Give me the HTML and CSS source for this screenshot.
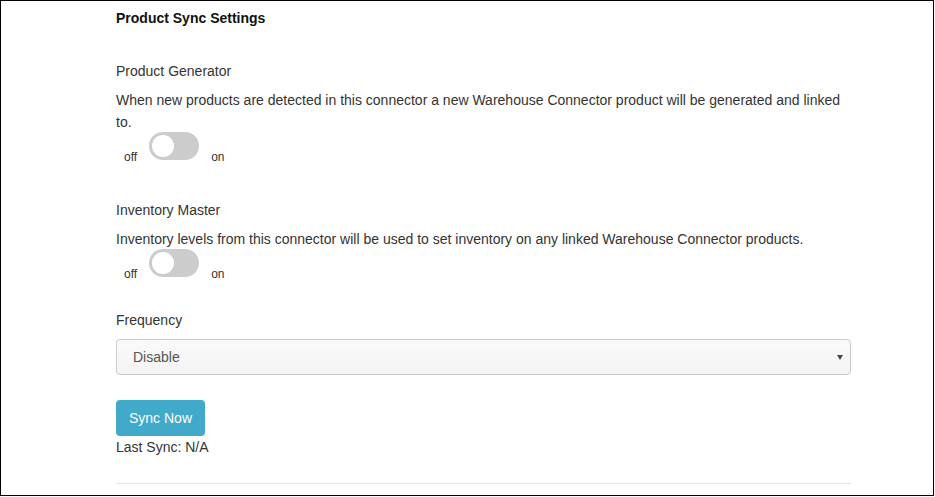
FILE: index.html
```html
<!DOCTYPE html>
<html>
<head>
<meta charset="utf-8">
<link rel="stylesheet" href="styles.css">
</head>
<body>
<div class="frame">
  <div class="content">
    <h4 class="title">Product Sync Settings</h4>

    <div class="setting">
      <div class="label">Product Generator</div>
      <p class="desc">When new products are detected in this connector a new Warehouse Connector product will be generated and linked to.</p>
      <div class="toggle-row">
        <span class="state">off</span>
        <span class="switch"><span class="knob"></span></span>
        <span class="state">on</span>
      </div>
    </div>

    <div class="setting">
      <div class="label">Inventory Master</div>
      <p class="desc">Inventory levels from this connector will be used to set inventory on any linked Warehouse Connector products.</p>
      <div class="toggle-row">
        <span class="state">off</span>
        <span class="switch"><span class="knob"></span></span>
        <span class="state">on</span>
      </div>
    </div>

    <div class="setting freq">
      <div class="label">Frequency</div>
      <div class="select">
        <span class="select-value">Disable</span>
        <span class="caret"></span>
      </div>
    </div>

    <button class="btn">Sync Now</button>
    <div class="last-sync">Last Sync: N/A</div>
    <hr class="rule">
  </div>
</div>
</body>
</html>
```

FILE: styles.css
```css
html, body {
  margin: 0;
  padding: 0;
  background: #fff;
}
body {
  font-family: "Liberation Sans", Arial, sans-serif;
  font-size: 14px;
  color: #333;
}
.frame {
  box-sizing: border-box;
  width: 934px;
  height: 496px;
  border: 1px solid #000;
  overflow: hidden;
}
.content {
  margin-left: 115px;
  width: 735px;
}
.title {
  margin: 0;
  padding-top: 9px;
  font-size: 14px;
  font-weight: bold;
  line-height: 16px;
  color: #111;
}
.label {
  line-height: 22px;
}
.title + .setting {
  padding-top: 34px;
}
.desc {
  margin: 7px 0 0;
  line-height: 22px;
}
.toggle-row {
  display: flex;
  align-items: flex-end;
  height: 29px;
  margin-top: -1px;
}
.state {
  font-size: 12px;
  line-height: 14px;
  margin-bottom: -3px;
}
.state:first-child {
  margin-left: 8px;
  margin-right: 12px;
}
.state:last-child {
  margin-left: 12px;
}
.switch {
  position: relative;
  width: 50px;
  height: 28px;
  border-radius: 14px;
  background: #ccc;
  align-self: flex-start;
}
.knob {
  position: absolute;
  left: 3px;
  top: 3px;
  width: 22px;
  height: 22px;
  border-radius: 50%;
  background: #fff;
}
.setting + .setting {
  padding-top: 38px;
}
.setting.freq {
  padding-top: 31px;
}
.select {
  box-sizing: border-box;
  margin-top: 8px;
  height: 36px;
  border: 1px solid #ccc;
  border-radius: 4px;
  background: linear-gradient(#fafafa, #f4f4f4);
  display: flex;
  align-items: center;
  justify-content: space-between;
  padding: 0 7px 0 16px;
  color: #555;
}
.caret {
  width: 0;
  height: 0;
  border-left: 3px solid transparent;
  border-right: 3px solid transparent;
  border-top: 5px solid #444;
}
.btn {
  display: block;
  margin-top: 25px;
  height: 36px;
  padding: 0 13px;
  border: none;
  border-radius: 4px;
  background: #41a9ca;
  color: #fff;
  font-family: "Liberation Sans", Arial, sans-serif;
  font-size: 14px;
}
.last-sync {
  line-height: 22px;
}
.rule {
  margin: 25px 0 0;
  border: 0;
  border-top: 1px solid #e5e5e5;
}
```
